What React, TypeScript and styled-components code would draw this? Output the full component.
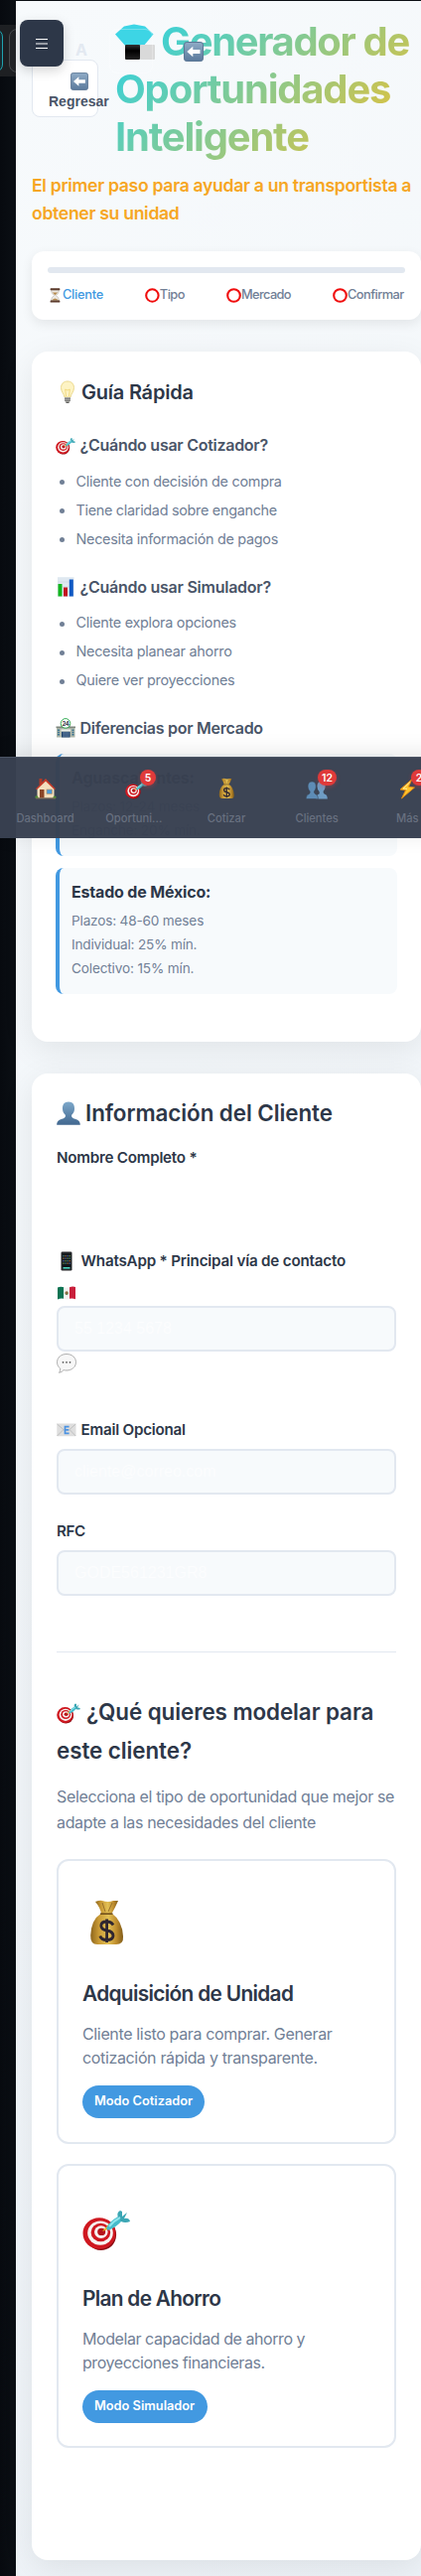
import React from 'react';
import styled, { createGlobalStyle, css } from 'styled-components';

const GlobalStyle = createGlobalStyle`
  * { box-sizing: border-box; }
  html, body { margin: 0; padding: 0; overflow: hidden; }
  body { background: #0a0d12; font-family: Inter, 'Liberation Sans', sans-serif; color: #2d3748; }
  h1, h2, h3, h4, p, ul { margin: 0; padding: 0; }
`;

type Spaced = { $ls?: number };
const spacing = css<Spaced>`letter-spacing: ${(p) => p.$ls ?? 0}px;`;

/* ---------- page shell ---------- */
const Page = styled.div`
  position: relative;
  width: 424px;
  height: 2594px;
  overflow: hidden;
  background: linear-gradient(90deg, #070a0f, #0b0f14 16px);
`;
const Toolbar = styled.div`
  position: absolute;
  top: 25px;
  left: 0;
  width: 16px;
  height: 52px;
  overflow: hidden;
  background: #1e2023;
`;
const ToolbarKey = styled.div<{ $x: number; $active?: boolean }>`
  position: absolute;
  top: 4px;
  left: ${(p) => p.$x}px;
  width: 44px;
  height: 44px;
  border-radius: 8px;
  border: 1px solid ${(p) => (p.$active ? '#1fa3b0' : '#484b4e')};
  background: ${(p) => (p.$active ? '#182a2f' : '#222427')};
`;
const Main = styled.main`
  position: relative;
  width: 424px;
  height: 2593px;
  top: 1px;
  margin-left: 16px;
  padding: 17px 16px 0;
  background: linear-gradient(135deg, #f7fafc 0%, #edf2f7 100%);
`;

/* ---------- floating pieces ---------- */
const MenuButton = styled.button`
  position: absolute;
  top: 20px;
  left: 20px;
  width: 44px;
  height: 47px;
  border: 0;
  padding: 0;
  border-radius: 8px;
  background: #2d3748;
  box-shadow: 0 4px 12px rgba(0, 0, 0, 0.17);
  display: flex;
  align-items: center;
  justify-content: center;
`;
const Floating = styled.div<{ $x: number; $y: number }>`
  position: absolute;
  left: ${(p) => p.$x}px;
  top: ${(p) => p.$y}px;
  display: flex;
`;
const GhostKey = styled.div`
  width: 44px;
  height: 45px;
  border: 1px solid rgba(255, 255, 255, 0.28);
  border-radius: 8px;
`;
const GhostLetter = styled.span`
  font-weight: 700;
  font-size: 16px;
  line-height: 20px;
  color: #e3e9f1;
`;

/* ---------- header ---------- */
const Header = styled.header`
  display: flex;
  align-items: flex-start;
`;
const BackButton = styled.button`
  flex: none;
  width: 66.5px;
  height: 57.5px;
  margin: 42px 17.5px 0 0;
  padding: 12px 0 0 16px;
  border: 1px solid #e2e8f0;
  border-radius: 8px;
  background: #fff;
  display: flex;
  flex-direction: column;
  align-items: flex-start;
  font: 600 14px/22px 'Liberation Sans', Arial, sans-serif;
  color: #4a5568;
  white-space: nowrap;
  svg { margin-left: 22px; flex: none; }
`;
const Title = styled.h1`
  width: 308px;
  font-size: 40px;
  line-height: 48px;
  font-weight: 700;
  white-space: nowrap;
  background: linear-gradient(135deg, #22d3ee 0%, #fbbf24 100%);
  -webkit-background-clip: text;
  background-clip: text;
  color: transparent;
`;
const TitleLine = styled.span<Spaced>`
  display: flex;
  height: 48px;
  ${spacing}
`;
const Subtitle = styled.p<Spaced>`
  margin-top: 11px;
  font-size: 17.6px;
  line-height: 28px;
  font-weight: 600;
  color: #f6a623;
  white-space: nowrap;
  ${spacing}
`;

/* ---------- progress ---------- */
const Progress = styled.section`
  width: 392px;
  height: 69px;
  margin-top: 24px;
  padding: 16px;
  background: #fff;
  border-radius: 12px;
  box-shadow: 0 4px 12px rgba(0, 0, 0, 0.08);
`;
const Track = styled.div`
  height: 6px;
  border-radius: 3px;
  background: #e2e8f0;
`;
const Steps = styled.div`
  display: flex;
  justify-content: space-between;
  margin-top: 12px;
`;
const Step = styled.div<Spaced & { $active?: boolean; $w: number }>`
  display: flex;
  align-items: center;
  width: ${(p) => p.$w}px;
  height: 20px;
  font-size: 12.8px;
  line-height: 20px;
  font-weight: 500;
  white-space: nowrap;
  color: ${(p) => (p.$active ? '#4299e1' : '#718096')};
  ${spacing}
`;

/* ---------- cards ---------- */
const Card = styled.section<{ $h: number; $pad: string }>`
  width: 392px;
  height: ${(p) => p.$h}px;
  margin-top: 32px;
  padding: ${(p) => p.$pad};
  background: #fff;
  border-radius: 16px;
  box-shadow: 0 8px 32px rgba(0, 0, 0, 0.08);
`;
const GuideTitle = styled.h2<Spaced>`
  display: flex;
  align-items: center;
  gap: 2px;
  margin-bottom: 27px;
  font-size: 20px;
  line-height: 28px;
  font-weight: 600;
  ${spacing}
`;
const GuideHeading = styled.h3<Spaced>`
  display: flex;
  align-items: center;
  gap: 4.5px;
  font-size: 16px;
  line-height: 24px;
  font-weight: 600;
  color: #4a5568;
  white-space: nowrap;
  ${spacing}
`;
const List = styled.ul`
  margin: 9.5px 0 22px;
  list-style: none;
`;
const Item = styled.li<Spaced>`
  display: flex;
  align-items: center;
  height: 29px;
  padding-left: 4px;
  font-size: 14.4px;
  line-height: 29px;
  color: #718096;
  white-space: nowrap;
  ${spacing}
  &::before {
    content: '';
    width: 5px;
    height: 5px;
    margin: 3px 11.5px 0 0;
    border-radius: 50%;
    background: #718096;
  }
`;
const Market = styled.div<{ $h: number; $mt: number }>`
  height: ${(p) => p.$h}px;
  margin-top: ${(p) => p.$mt}px;
  padding: 12px 12px 0;
  border-left: 4px solid #4299e1;
  border-radius: 8px;
  background: #f7fafc;
`;
const MarketName = styled.h4<Spaced>`
  margin-bottom: 5px;
  font-size: 16px;
  line-height: 24px;
  font-weight: 700;
  ${spacing}
`;
const MarketLine = styled.p<Spaced>`
  font-size: 13.6px;
  line-height: 24px;
  color: #718096;
  ${spacing}
`;

/* ---------- bottom navigation ---------- */
const Nav = styled.nav`
  position: absolute;
  left: 0;
  top: 762px;
  width: 456px;
  height: 82px;
  display: flex;
  border-top: 1px solid #4b5464;
  background: rgba(56, 65, 81, 0.975);
  box-shadow: 0 -4px 20px rgba(0, 0, 0, 0.1);
`;
const NavItem = styled.div`
  position: relative;
  width: 91.2px;
  padding-top: 20px;
  display: flex;
  flex-direction: column;
  align-items: center;
`;
const NavLabel = styled.span<{ $shift?: number }>`
  margin-top: 9px;
  margin-left: ${(p) => p.$shift ?? 0}px;
  font-size: 11.2px;
  line-height: 20px;
  font-weight: 500;
  color: #687080;
`;
const Badge = styled.span<{ $w: number; $x: number }>`
  position: absolute;
  top: 12px;
  left: ${(p) => p.$x}px;
  width: ${(p) => p.$w}px;
  height: 16px;
  border-radius: 8px;
  background: #e03a3a;
  box-shadow: 0 2px 4px rgba(229, 62, 62, 0.3);
  color: #fff;
  font-size: 10.4px;
  line-height: 17px;
  font-weight: 600;
  text-align: center;
`;

/* ---------- form ---------- */
const FormTitle = styled.h2<Spaced>`
  display: flex;
  align-items: center;
  gap: 5px;
  height: 38px;
  margin-bottom: 14.5px;
  font-size: 22.4px;
  line-height: 38px;
  font-weight: 600;
  white-space: nowrap;
  ${spacing}
`;
const Field = styled.div<{ $h: number }>`
  height: ${(p) => p.$h}px;
  display: flex;
  flex-direction: column;
  align-items: flex-start;
`;
const Label = styled.label<Spaced>`
  display: flex;
  align-items: center;
  gap: 4.5px;
  height: 22px;
  margin-bottom: 8.5px;
  font-size: 15.2px;
  line-height: 22px;
  font-weight: 600;
  white-space: nowrap;
  ${spacing}
`;
const FlagRow = styled.div`
  display: flex;
  height: 26px;
  padding-top: 3px;
`;
const BubbleRow = styled.div`
  display: flex;
  padding-top: 2px;
`;
const Input = styled.input`
  width: 342px;
  height: 46px;
  padding: 0 16px;
  border: 2px solid #e2e8f0;
  border-radius: 8px;
  background: #f7fafc;
  font: 400 16px 'Liberation Sans', Arial, sans-serif;
  &::placeholder { color: #fcfdfe; opacity: 1; }
`;
const Divider = styled.hr`
  height: 1px;
  margin: 30.5px 0 41px;
  border: 0;
  background: #e2e8f0;
`;
const Question = styled.h2`
  font-size: 22.4px;
  line-height: 38.6px;
  font-weight: 600;
  white-space: nowrap;
`;
const QuestionLine = styled.span<Spaced>`
  display: flex;
  align-items: center;
  gap: 6px;
  height: 38.6px;
  ${spacing}
`;
const Hint = styled.p<Spaced>`
  margin: 13.9px 0 24.1px;
  font-size: 16px;
  line-height: 26px;
  color: #718096;
  white-space: nowrap;
  ${spacing}
`;
const Option = styled.article<{ $h: number }>`
  height: ${(p) => p.$h}px;
  margin-bottom: 20px;
  padding: 38px 24px 0;
  border: 2px solid #e2e8f0;
  border-radius: 12px;
  display: flex;
  flex-direction: column;
  align-items: flex-start;
`;
const OptionTitle = styled.h3<Spaced>`
  margin: 33.4px 0 14px;
  font-size: 20.8px;
  line-height: 28px;
  font-weight: 600;
  ${spacing}
`;
const OptionText = styled.p<Spaced>`
  font-size: 16px;
  line-height: 24px;
  color: #718096;
  white-space: nowrap;
  ${spacing}
`;
const Pill = styled.span<{ $w: number }>`
  width: ${(p) => p.$w}px;
  height: 32.5px;
  margin-top: 16.6px;
  padding-left: 12px;
  border-radius: 16.5px;
  background: #4299e1;
  color: #fff;
  font-size: 12.8px;
  line-height: 31px;
  font-weight: 600;
`;

/* ---------- drawings ---------- */
type Size = { s: number };

const Target = ({ s }: Size) => (
  <svg width={s} height={s} viewBox="0 0 48 48">
    <ellipse cx="18.5" cy="31" rx="15.5" ry="16" fill="#8c0b12" transform="rotate(-20 18.5 31)" />
    <ellipse cx="17" cy="30" rx="16.5" ry="15.8" fill="#cf1820" />
    <ellipse cx="18" cy="29.6" rx="12.8" ry="12.2" fill="#f7f4f1" />
    <ellipse cx="18.4" cy="29" rx="9.8" ry="9.2" fill="#cf1820" />
    <ellipse cx="18.8" cy="28.6" rx="6.8" ry="6.3" fill="#f7f4f1" />
    <ellipse cx="19.2" cy="28.4" rx="4" ry="3.6" fill="#b5141b" />
    <path d="M20 28 L27 20 L31 24 Z" fill="#e8b321" />
    <path d="M24 25 Q27 18 36 13 L40 17 Q34 24 26 27 Z" fill="#45bccb" />
    <path d="M36 14 Q34 9 38 7 L40 8 L40 13 L45 9 L42 15 Q47 14 48 18 Q43 20 39 18 Z" fill="#3ba6b4" />
    <path d="M27 23 Q32 17 38 14" stroke="#8fe4ec" strokeWidth="2" fill="none" />
  </svg>
);
const MoneyBag = ({ s }: Size) => (
  <svg width={s} height={s} viewBox="0 0 48 48">
    <defs>
      <linearGradient id="bag" x1="0" x2="1" y1="0" y2="0">
        <stop offset="0" stopColor="#8d651c" />
        <stop offset="0.25" stopColor="#c99a35" />
        <stop offset="0.55" stopColor="#e2c055" />
        <stop offset="0.8" stopColor="#bd8b2c" />
        <stop offset="1" stopColor="#805b18" />
      </linearGradient>
    </defs>
    <path d="M13 3 Q18 1 20 2 Q26 4 31 2 L36 2 Q33 9 29.500 15 L19 15 Q18 9 13 3Z" fill="url(#bag)" />
    <path d="M18.500 15 Q9 21 8.200 37 Q8 46 15 46 L34 46 Q41.500 46 41 38 Q40 22 30 15Z" fill="url(#bag)" />
    <path d="M18 15.200 H30.500" stroke="#73511a" strokeWidth="1.600" />
    <path d="M20 4 L23 13 M30 4 L26 13" stroke="#99712a" strokeWidth="1" />
    <path d="M31 26.500 Q29 23 24.500 23 Q19 23 18.800 27 Q18.800 31 24.500 32 Q31 33 31 37.500 Q30.500 41.500 24.500 41.500 Q19 41.500 17.800 37.500 M24.600 20.500 V44" fill="none" stroke="#2f2630" strokeWidth="2.800" />
  </svg>
);
const House = ({ s }: Size) => (
  <svg width={s} height={s} viewBox="0 0 22 22">
    <rect x="4.500" y="1" width="3" height="6" fill="#ad3a28" />
    <path d="M2.500 11 L11 2.500 L19.500 11 V20.500 H2.500Z" fill="#f3dfbd" />
    <path d="M0.800 11.500 L11 1 L21 11.500 L19.600 12 L11 3.800 L2.200 12Z" fill="#c63c2a" />
    <rect x="5" y="12" width="4.500" height="8.500" fill="#8a4527" />
    <rect x="12" y="12" width="5.500" height="4.500" fill="#4b9bd8" stroke="#bd9368" strokeWidth="0.700" />
    <path d="M0.500 19 Q2.500 17 4 20.800 H0.500Z M18 20.800 Q19 17.500 21.500 19 V20.800Z" fill="#4f8f34" />
    <path d="M1 21 H21" stroke="#8b7155" strokeWidth="0.800" />
  </svg>
);
const Person = ({ s }: Size) => (
  <svg width={s} height={s} viewBox="0 0 24 24">
    <defs>
      <linearGradient id="person" x1="0" x2="0" y1="0" y2="1">
        <stop offset="0" stopColor="#7ea9cb" />
        <stop offset="1" stopColor="#41678f" />
      </linearGradient>
    </defs>
    <path d="M12 0.400 C16.500 0.400 18.300 3.500 18 8 C17.800 11 16.500 12.500 15 14 Q14.800 16.500 17 17.200 C21.500 18.500 23.700 19.500 23.800 23.700 H0.200 C0.300 19.500 2.500 18.500 7 17.200 Q9.200 16.500 9 14 C7.500 12.500 6.200 11 6 8 C5.700 3.500 7.500 0.400 12 0.400Z" fill="url(#person)" />
  </svg>
);
const People = ({ s }: Size) => (
  <svg width={s} height={s} viewBox="0 0 22 22">
    <g fill="#6e9cc4">
      <path d="M15.500 4 C19 4 20 7 19.500 10 Q19 12.500 17.500 14 Q17.500 16 19 16.700 Q21.800 17.500 21.800 21.500 H10 Q11 17 13.500 16.500 Q14 15 13.500 14 Q11.500 12 11.500 9 C11.500 6 12.500 4 15.500 4Z" />
    </g>
    <path d="M6.200 4 C9.600 4 10.500 7 10.200 10 Q9.800 12.500 8.300 14 Q8.300 16 9.800 16.700 Q12.500 17.500 12.500 21.500 H0.200 Q0.200 17.500 3 16.700 Q4.500 16 4.200 14 Q2.500 12.500 2.200 10 C1.800 7 2.800 4 6.200 4Z" fill="#5d8cb6" stroke="#384151" strokeWidth="0.500" />
  </svg>
);
const Bolt = ({ s }: Size) => (
  <svg width={s} height={s} viewBox="0 0 22 22">
    <path d="M16 1.500 L4 12 L9.500 12.800 L5.500 21 L18.500 10 L12.500 9.200Z" fill="#ffc32b" stroke="#e58b12" strokeWidth="0.900" />
    <path d="M14 4.500 L7 11 L11 11.400" fill="none" stroke="#fff0a0" strokeWidth="1" />
  </svg>
);
const Chart = ({ s }: Size) => (
  <svg width={s} height={s} viewBox="0 0 20 20">
    <rect x="2" y="0.200" width="16.500" height="19.600" fill="#dfe8f0" />
    <path d="M2 5H18 M2 10H18 M2 15H18" stroke="#c5d2de" strokeWidth="0.500" />
    <rect x="2.500" y="7" width="4" height="12.500" fill="#12b51e" />
    <rect x="8" y="10.500" width="4" height="9" fill="#c41420" />
    <rect x="13.800" y="2.500" width="4" height="17" fill="#1159c4" />
  </svg>
);
const Bulb = ({ s }: Size) => (
  <svg width={s} height={s} viewBox="0 0 24 24">
    <path d="M12 1 C16 1 18.500 3.800 18.500 7.500 C18.500 11.500 15.500 13.500 15 17 H9 C8.500 13.500 5.500 11.500 5.500 7.500 C5.500 3.800 8 1 12 1Z" fill="#fdf3c4" stroke="#e9d583" strokeWidth="0.900" />
    <path d="M10.500 16 L9.700 9 Q12 11 14.300 9 L13.500 16" fill="none" stroke="#f0d36e" strokeWidth="0.800" />
    <path d="M9 17 H15 V20.500 L13.500 22.600 H10.500 L9 20.500Z" fill="#a9a9a5" />
    <path d="M9 18.700 H15 M9.300 20.500 H14.700" stroke="#6c6c6a" strokeWidth="0.700" />
    <path d="M10.500 22.400H13.500" stroke="#3d3d3d" strokeWidth="0.900" />
  </svg>
);
const Bank = ({ s }: Size) => (
  <svg width={s} height={s} viewBox="0 0 20 20">
    <path d="M1 9 H5 V6 H15 V9 H19.500 V19.500 H1Z" fill="#aeb7aa" />
    <rect x="0.500" y="8.500" width="19.500" height="1.600" fill="#7d857c" />
    <path d="M3 11.500 V18 M17.500 11.500 V18" stroke="#2e6d91" strokeWidth="1.700" strokeDasharray="1.500 0.700" />
    <rect x="5.500" y="11.500" width="9.500" height="2" fill="#eef1ec" />
    <rect x="6" y="13.800" width="8.500" height="5.700" fill="#294b74" />
    <path d="M8.300 14V19.500 M10.300 14V19.500 M12.300 14V19.500" stroke="#8aa5bf" strokeWidth="0.600" />
    <circle cx="10" cy="5.400" r="4.800" fill="#fff" stroke="#36ad56" strokeWidth="1" />
    <text x="10" y="7.600" fontSize="6" fontWeight="700" textAnchor="middle" fill="#38404a" fontFamily="Inter" letterSpacing="-0.3">24</text>
  </svg>
);
const Hourglass = () => (
  <svg width="15" height="15" viewBox="0 0 15 15">
    <path d="M3.500 2 Q3.500 5.500 6.600 7.500 Q3.500 9.500 3.500 13 H11.500 Q11.500 9.500 8.400 7.500 Q11.500 5.500 11.500 2Z" fill="#eeebe6" stroke="#b5aea5" strokeWidth="0.600" />
    <path d="M4.800 4.500 H10.200 L7.500 7.300Z M4.300 12.500 Q7.500 8.500 10.700 12.500Z" fill="#b58c51" />
    <rect x="2.600" y="0.300" width="9.800" height="1.900" rx="0.600" fill="#5b3a2b" />
    <rect x="2.600" y="12.600" width="9.800" height="2" rx="0.600" fill="#5b3a2b" />
  </svg>
);
const Ring = () => (
  <svg width="15" height="15" viewBox="0 0 15 15">
    <circle cx="7.500" cy="7.500" r="6.300" fill="none" stroke="#f00d0d" strokeWidth="2.100" />
  </svg>
);
const Phone = ({ s }: Size) => (
  <svg width={s} height={s} viewBox="0 0 20 20">
    <rect x="4.500" y="0.500" width="11" height="19" rx="1.300" fill="#26282b" />
    <rect x="5.600" y="2.600" width="8.800" height="15" fill="#11161a" />
    {[4, 6.5, 9, 11.5].map((y, r) =>
      [6.3, 8.4, 10.5, 12.6].map((x, c) => (
        <rect key={`${r}-${c}`} x={x} y={y} width="1.300" height="1.400" fill={['#3d7f83', '#9a683c', '#4b5fa6', '#668a43'][(r + c) % 4]} />
      )),
    )}
    <rect x="6.500" y="16" width="7" height="1.600" fill="#48d5bd" />
  </svg>
);
const Flag = () => (
  <svg width="20" height="20" viewBox="0 0 20 20">
    <path d="M1 4.500 Q4 3 7.300 4.200 V15.800 Q4 15 1 16.500Z" fill="#0c7352" />
    <path d="M7.300 4.200 Q10 5.300 13 4.300 V15.800 Q10 17 7.300 15.800Z" fill="#f2f2f0" />
    <path d="M13 4.300 Q16 3 19 4 V16.300 Q16 15 13 15.800Z" fill="#c91f3b" />
    <circle cx="10.100" cy="10" r="1.700" fill="#8a6b3f" />
    <path d="M8.800 11 Q10 12.500 11.500 11" stroke="#4c8550" strokeWidth="0.700" fill="none" />
  </svg>
);
const Bubble = () => (
  <svg width="20" height="20" viewBox="0 0 20 20">
    <path d="M10 0.500 C15.300 0.500 19.500 4 19.500 8.800 C19.500 13.500 15.300 17 10 17 Q8.500 17 7 16.600 Q5.500 18.800 2.500 19.300 Q4 17.500 3.700 15 C1.500 13.500 0.500 11.200 0.500 8.800 C0.500 4 4.700 0.500 10 0.500Z" fill="#f7f7f7" stroke="#a6a6a6" strokeWidth="0.900" />
    <g fill="#555">
      <circle cx="6.500" cy="8.800" r="0.900" />
      <circle cx="10" cy="8.800" r="0.900" />
      <circle cx="13.500" cy="8.800" r="0.900" />
    </g>
  </svg>
);
const Mail = ({ s }: Size) => (
  <svg width={s} height={s} viewBox="0 0 20 20">
    <rect x="0.300" y="3.500" width="19.200" height="12.700" rx="0.600" fill="#dedede" />
    <path d="M0.500 4 L8 10.500 M19.200 4 L12 10.500 M0.500 16 L7 9.500 M19.200 16 L13 9.500" stroke="#b3b3b3" strokeWidth="0.700" />
    <path d="M12.600 6.600 H8.500 V13.300 H12.600 M8.500 9.900 H12.200" stroke="#4c93e2" strokeWidth="1.700" fill="none" />
  </svg>
);
const ArrowKey = ({ s }: Size) => (
  <svg width={s} height={s} viewBox="0 0 20 20">
    <defs>
      <linearGradient id="key" x1="0" x2="0" y1="0" y2="1">
        <stop offset="0" stopColor="#8fabc6" />
        <stop offset="1" stopColor="#5b7a9c" />
      </linearGradient>
    </defs>
    <rect x="0.500" y="0.500" width="19" height="19" rx="2.600" fill="url(#key)" stroke="#5c7795" />
    <path d="M3.300 10 L9.300 4.800 V8 H16.500 V12 H9.300 V15.200Z" fill="#fff" />
  </svg>
);
const Gem = () => (
  <svg width="46" height="48" viewBox="0 1 46 48">
    <defs>
      <linearGradient id="tile" x1="0" x2="0" y1="0" y2="1">
        <stop offset="0" stopColor="#333" />
        <stop offset="0.400" stopColor="#000" />
        <stop offset="1" stopColor="#222" />
      </linearGradient>
    </defs>
    <path d="M0 17.500 L9 9.500 L19 7.500 L30 9.500 L38.500 17.500 L28 30 H11Z" fill="#3dd5e5" />
    <rect x="10" y="28" width="15" height="15" rx="1" fill="url(#tile)" />
    <rect x="25" y="28" width="15" height="15" rx="1" fill="#d9d9d9" />
  </svg>
);

export default function App() {
  return (
    <>
      <GlobalStyle />
      <Page>
        <Toolbar>
          <ToolbarKey $x={-41} $active />
          <ToolbarKey $x={9} />
        </Toolbar>

        <Main>
          <Header>
            <BackButton>
              <ArrowKey s={18} />
              Regresar
            </BackButton>
            <Title>
              <TitleLine $ls={-1.35}><Gem />Generador de</TitleLine>
              <TitleLine $ls={-1.2}>Oportunidades</TitleLine>
              <TitleLine $ls={-1.2}>Inteligente</TitleLine>
            </Title>
          </Header>
          <Subtitle $ls={-0.31}>
            El primer paso para ayudar a un transportista a<br />obtener su unidad
          </Subtitle>

          <Progress>
            <Track />
            <Steps>
              <Step $active $w={56} $ls={-0.25}><Hourglass />Cliente</Step>
              <Step $w={40} $ls={-0.5}><Ring />Tipo</Step>
              <Step $w={65} $ls={-0.62}><Ring />Mercado</Step>
              <Step $w={73} $ls={-0.55}><Ring />Confirmar</Step>
            </Steps>
          </Progress>

          <Card $h={695} $pad="27px 24px 0">
            <GuideTitle $ls={-0.22}><Bulb s={24} />Guía Rápida</GuideTitle>
            <GuideHeading $ls={-0.27}><Target s={20} />¿Cuándo usar Cotizador?</GuideHeading>
            <List>
              <Item $ls={-0.26}>Cliente con decisión de compra</Item>
              <Item $ls={-0.29}>Tiene claridad sobre enganche</Item>
              <Item $ls={-0.29}>Necesita información de pagos</Item>
            </List>
            <GuideHeading $ls={-0.25}><Chart s={20} />¿Cuándo usar Simulador?</GuideHeading>
            <List>
              <Item $ls={-0.28}>Cliente explora opciones</Item>
              <Item $ls={-0.28}>Necesita planear ahorro</Item>
              <Item $ls={-0.28}>Quiere ver proyecciones</Item>
            </List>
            <GuideHeading $ls={-0.27}><Bank s={20} />Diferencias por Mercado</GuideHeading>
            <Market $h={102.5} $mt={14}>
              <MarketName $ls={-0.18}>Aguascalientes:</MarketName>
              <MarketLine $ls={-0.18}>Plazos: 12-24 meses</MarketLine>
              <MarketLine $ls={-0.18}>Enganche: 20% mín.</MarketLine>
            </Market>
            <Market $h={126.5} $mt={12.5}>
              <MarketName $ls={-0.18}>Estado de México:</MarketName>
              <MarketLine $ls={-0.17}>Plazos: 48-60 meses</MarketLine>
              <MarketLine $ls={-0.19}>Individual: 25% mín.</MarketLine>
              <MarketLine $ls={-0.15}>Colectivo: 15% mín.</MarketLine>
            </Market>
          </Card>

          <Card $h={1497} $pad="21px 25px 0">
            <FormTitle $ls={-0.07}><Person s={24} />Información del Cliente</FormTitle>
            <Field $h={104}>
              <Label $ls={-0.24}>Nombre Completo *</Label>
            </Field>
            <Field $h={170}>
              <Label $ls={-0.2}><Phone s={20} />WhatsApp * Principal vía de contacto</Label>
              <FlagRow><Flag /></FlagRow>
              <Input placeholder="55 1234 5678" />
              <BubbleRow><Bubble /></BubbleRow>
            </Field>
            <Field $h={102}>
              <Label $ls={-0.23}><Mail s={20} />Email Opcional</Label>
              <Input placeholder="cliente@correo.com" />
            </Field>
            <Field $h={102}>
              <Label $ls={-0.4}>RFC</Label>
              <Input placeholder="GODE561231GR8" />
            </Field>
            <Divider />
            <Question>
              <QuestionLine $ls={-0.08}><Target s={24} />¿Qué quieres modelar para</QuestionLine>
              <QuestionLine $ls={-0.07}>este cliente?</QuestionLine>
            </Question>
            <Hint $ls={-0.355}>
              Selecciona el tipo de oportunidad que mejor se<br />adapte a las necesidades del cliente
            </Hint>
            <Option $h={287}>
              <MoneyBag s={48} />
              <OptionTitle $ls={-0.65}>Adquisición de Unidad</OptionTitle>
              <OptionText $ls={-0.35}>Cliente listo para comprar. Generar<br />cotización rápida y transparente.</OptionText>
              <Pill $w={123}>Modo Cotizador</Pill>
            </Option>
            <Option $h={286}>
              <Target s={48} />
              <OptionTitle $ls={-0.68}>Plan de Ahorro</OptionTitle>
              <OptionText $ls={-0.43}>Modelar capacidad de ahorro y<br />proyecciones financieras.</OptionText>
              <Pill $w={126}>Modo Simulador</Pill>
            </Option>
          </Card>
        </Main>

        <Floating $x={76} $y={40}><GhostLetter>A</GhostLetter></Floating>
        <Floating $x={110} $y={29}><GhostKey /></Floating>
        <Floating $x={185} $y={42}><ArrowKey s={20} /></Floating>

        <MenuButton aria-label="Menú">
          <svg width="12" height="12" viewBox="0 0 12 12">
            <path d="M0 1.500H12 M0 6H12 M0 10.500H12" stroke="#fff" strokeWidth="1.200" />
          </svg>
        </MenuButton>

        <Nav>
          <NavItem><House s={22} /><NavLabel>Dashboard</NavLabel></NavItem>
          <NavItem><Target s={22} /><NavLabel $shift={-4}>Oportuni...</NavLabel><Badge $x={49.8} $w={16}>5</Badge></NavItem>
          <NavItem><MoneyBag s={22} /><NavLabel>Cotizar</NavLabel></NavItem>
          <NavItem><People s={22} /><NavLabel>Clientes</NavLabel><Badge $x={46.4} $w={19}>12</Badge></NavItem>
          <NavItem><Bolt s={22} /><NavLabel>Más</NavLabel><Badge $x={49.2} $w={16}>2</Badge></NavItem>
        </Nav>
      </Page>
    </>
  );
}
